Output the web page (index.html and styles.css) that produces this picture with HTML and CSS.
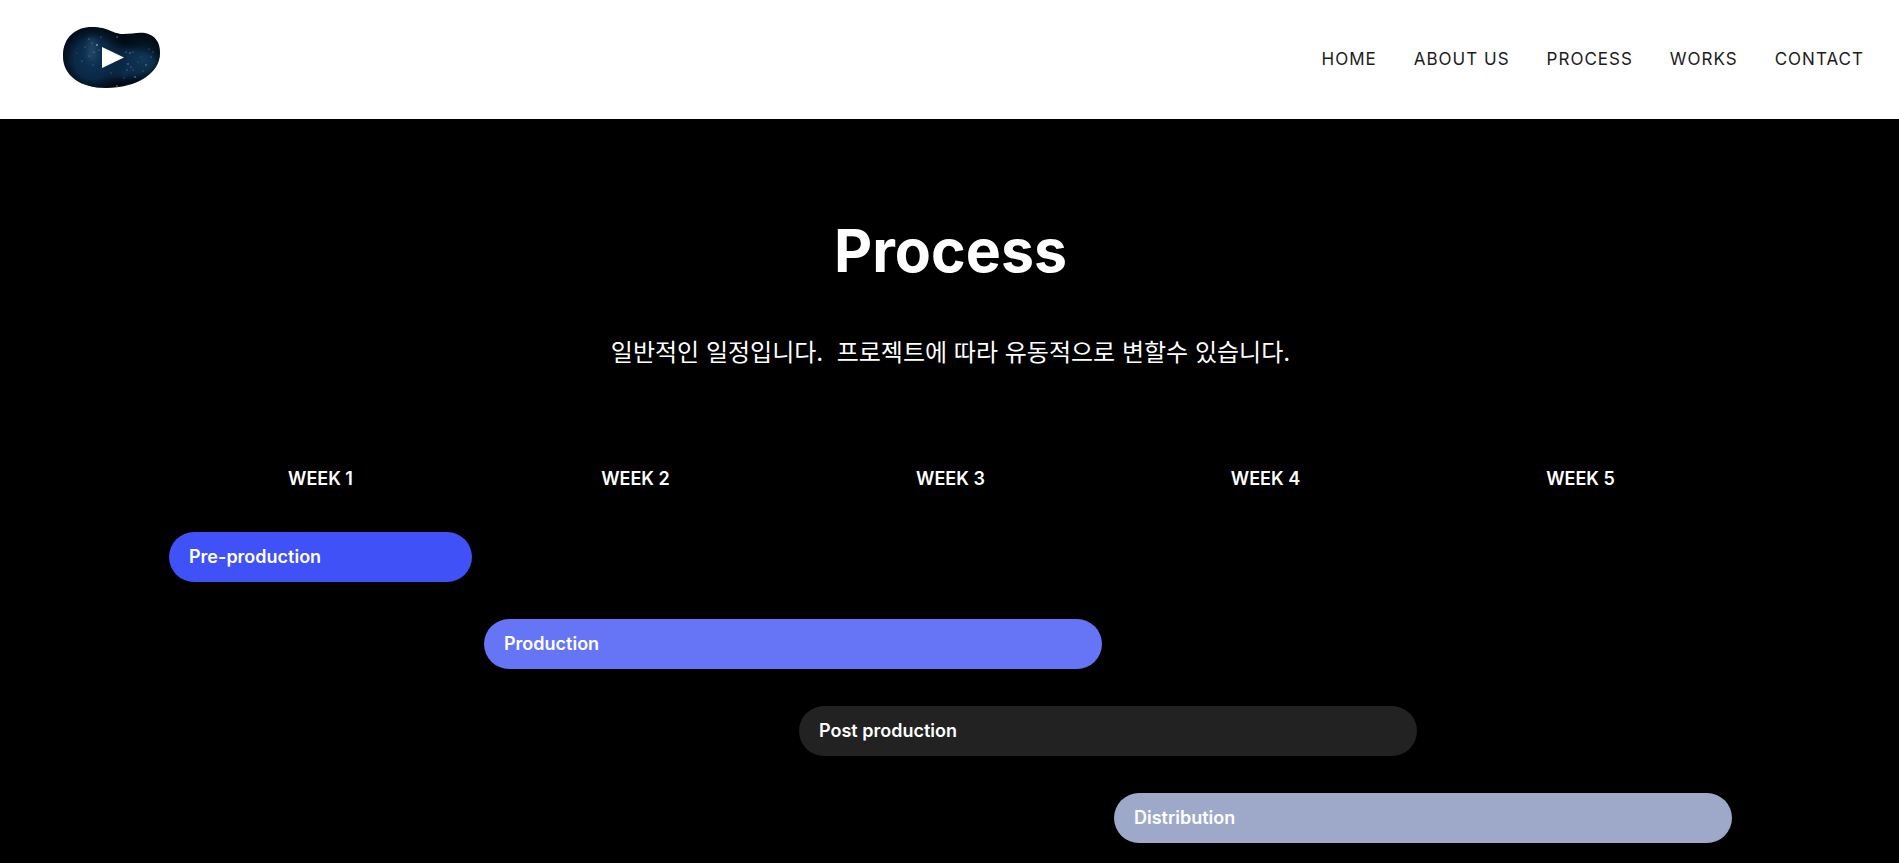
FILE: index.html
```html
<!DOCTYPE html>
<html lang="ko">
<head>
<meta charset="utf-8">
<meta name="viewport" content="width=device-width, initial-scale=1">
<title>Process</title>
<link rel="stylesheet" href="styles.css">
</head>
<body>
<header class="site-header">
  <a class="logo" href="#" aria-label="Home">
    <svg width="98" height="62" viewBox="0 0 98 62" aria-hidden="true">
      <defs>
        <radialGradient id="sky" cx="30" cy="32" r="36" gradientUnits="userSpaceOnUse">
          <stop offset="0" stop-color="#0f3456"/>
          <stop offset="0.55" stop-color="#0a2846"/>
          <stop offset="1" stop-color="#04101f" stop-opacity="0"/>
        </radialGradient>
        <radialGradient id="sky2" cx="80" cy="33" r="25" gradientUnits="userSpaceOnUse">
          <stop offset="0" stop-color="#113a5a"/>
          <stop offset="1" stop-color="#06182b" stop-opacity="0"/>
        </radialGradient>
        <clipPath id="blob">
          <path d="M0 29C0 10 13 0 29 0C45 0 50 7 60 7C69 7 74 5 82 6C92 8 97 15 97 26C97 46 74 61 43 61C18 61 0 49 0 29Z"/>
        </clipPath>
        <filter id="dust-blur" x="-50%" y="-50%" width="200%" height="200%"><feGaussianBlur stdDeviation="3"/></filter>
      </defs>
      <g clip-path="url(#blob)">
        <rect width="98" height="62" fill="#020b15"/>
        <ellipse cx="56" cy="36" rx="38" ry="15" fill="#0a3156" filter="url(#dust-blur)"/>
        <rect width="98" height="62" fill="url(#sky)"/>
        <rect width="98" height="62" fill="url(#sky2)"/>
        <ellipse cx="29" cy="22" rx="5" ry="12" fill="#3d6e86" opacity="0.4" filter="url(#dust-blur)"/>
        <g fill="#8fbac9" opacity="0.8">
          <circle cx="34" cy="18" r="1"/><circle cx="38" cy="10" r=".6"/><circle cx="26" cy="12" r=".6"/>
          <circle cx="22" cy="20" r=".5"/><circle cx="29" cy="16" r=".5"/><circle cx="31" cy="25" r=".6"/>
          <circle cx="26" cy="29" r=".5"/><circle cx="36" cy="23" r=".6"/><circle cx="19" cy="34" r=".5"/>
          <circle cx="30" cy="38" r=".5"/><circle cx="14" cy="26" r=".4"/><circle cx="54" cy="10" r=".7"/>
          <circle cx="63" cy="25" r=".6"/><circle cx="67" cy="26" r=".7"/><circle cx="70" cy="25" r=".5"/>
          <circle cx="65" cy="37" r=".7"/><circle cx="68" cy="40" r=".6"/><circle cx="64" cy="43" r=".6"/>
          <circle cx="70" cy="43" r=".5"/><circle cx="72" cy="50" r=".8"/><circle cx="83" cy="38" r=".7"/>
          <circle cx="80" cy="44" r=".5"/><circle cx="88" cy="30" r=".6"/><circle cx="90" cy="25" r=".5"/>
          <circle cx="86" cy="22" r=".5"/><circle cx="54" cy="59" r=".8"/><circle cx="48" cy="46" r=".5"/>
          <circle cx="61" cy="51" r=".5"/><circle cx="75" cy="35" r=".4"/><circle cx="78" cy="30" r=".4"/>
        </g>
      </g>
      <path d="M39 20L61 30.500L39 41Z" fill="#fff"/>
    </svg>
  </a>
  <nav class="menu" aria-label="Main">
    <a href="#">HOME</a>
    <a href="#">ABOUT US</a>
    <a href="#">PROCESS</a>
    <a href="#">WORKS</a>
    <a href="#">CONTACT</a>
  </nav>
</header>
<main class="process">
  <h1 class="title">Process</h1>
  <p class="lead">일반적인 일정입니다.&nbsp; 프로젝트에 따라 유동적으로 변할수 있습니다.</p>
  <section class="timeline" aria-label="Schedule">
    <div class="row weeks">
      <h2 class="week">WEEK 1</h2>
      <h2 class="week">WEEK 2</h2>
      <h2 class="week">WEEK 3</h2>
      <h2 class="week">WEEK 4</h2>
      <h2 class="week">WEEK 5</h2>
    </div>
    <div class="row"><div class="bar bar-pre">Pre-production</div></div>
    <div class="row"><div class="bar bar-prod">Production</div></div>
    <div class="row"><div class="bar bar-post">Post production</div></div>
    <div class="row"><div class="bar bar-dist">Distribution</div></div>
  </section>
</main>
</body>
</html>
```
FILE: styles.css
```css
* {
  box-sizing: border-box;
}

body {
  margin: 0;
  background: #000;
  color: #fff;
  font-family: Inter, "Noto Sans CJK KR", sans-serif;
}

.site-header {
  display: flex;
  align-items: center;
  justify-content: space-between;
  padding: 27px 35px 30px 63px;
  background: #fff;
}

.logo svg {
  display: block;
}

.menu {
  display: flex;
  gap: 37px;
  padding-top: 2px;
  font-size: 17px;
  line-height: 24px;
  letter-spacing: 1px;
}

.menu a {
  color: #1c1c1c;
  text-decoration: none;
}

.process {
  padding: 97px 167px 20px 169px;
}

.title {
  margin: 0;
  font-size: 59px;
  font-weight: 700;
  line-height: 70px;
  text-align: center;
}

.lead {
  margin: 47px 0 0;
  font-size: 24px;
  line-height: 40px;
  text-align: center;
}

.timeline {
  display: flex;
  flex-direction: column;
  gap: 37px;
  margin-top: 92px;
}

.row {
  display: grid;
  grid-template-columns: repeat(5, 1fr);
  column-gap: 12px;
}

.week {
  margin: 0;
  font-size: 18px;
  font-weight: 600;
  line-height: 28px;
  text-align: center;
}

.weeks {
  padding-bottom: 2px;
}

.bar {
  padding: 11px 20px;
  border-radius: 25px;
  font-size: 18px;
  font-weight: 600;
  line-height: 28px;
}

.bar-pre {
  grid-column: 1;
  background: #3f51f7;
}

.bar-prod {
  grid-column: 2 / span 2;
  background: #6674f6;
}

.bar-post {
  grid-column: 3 / span 2;
  background: #222;
}

.bar-dist {
  grid-column: 4 / span 2;
  background: #9ea9ca;
}
```
